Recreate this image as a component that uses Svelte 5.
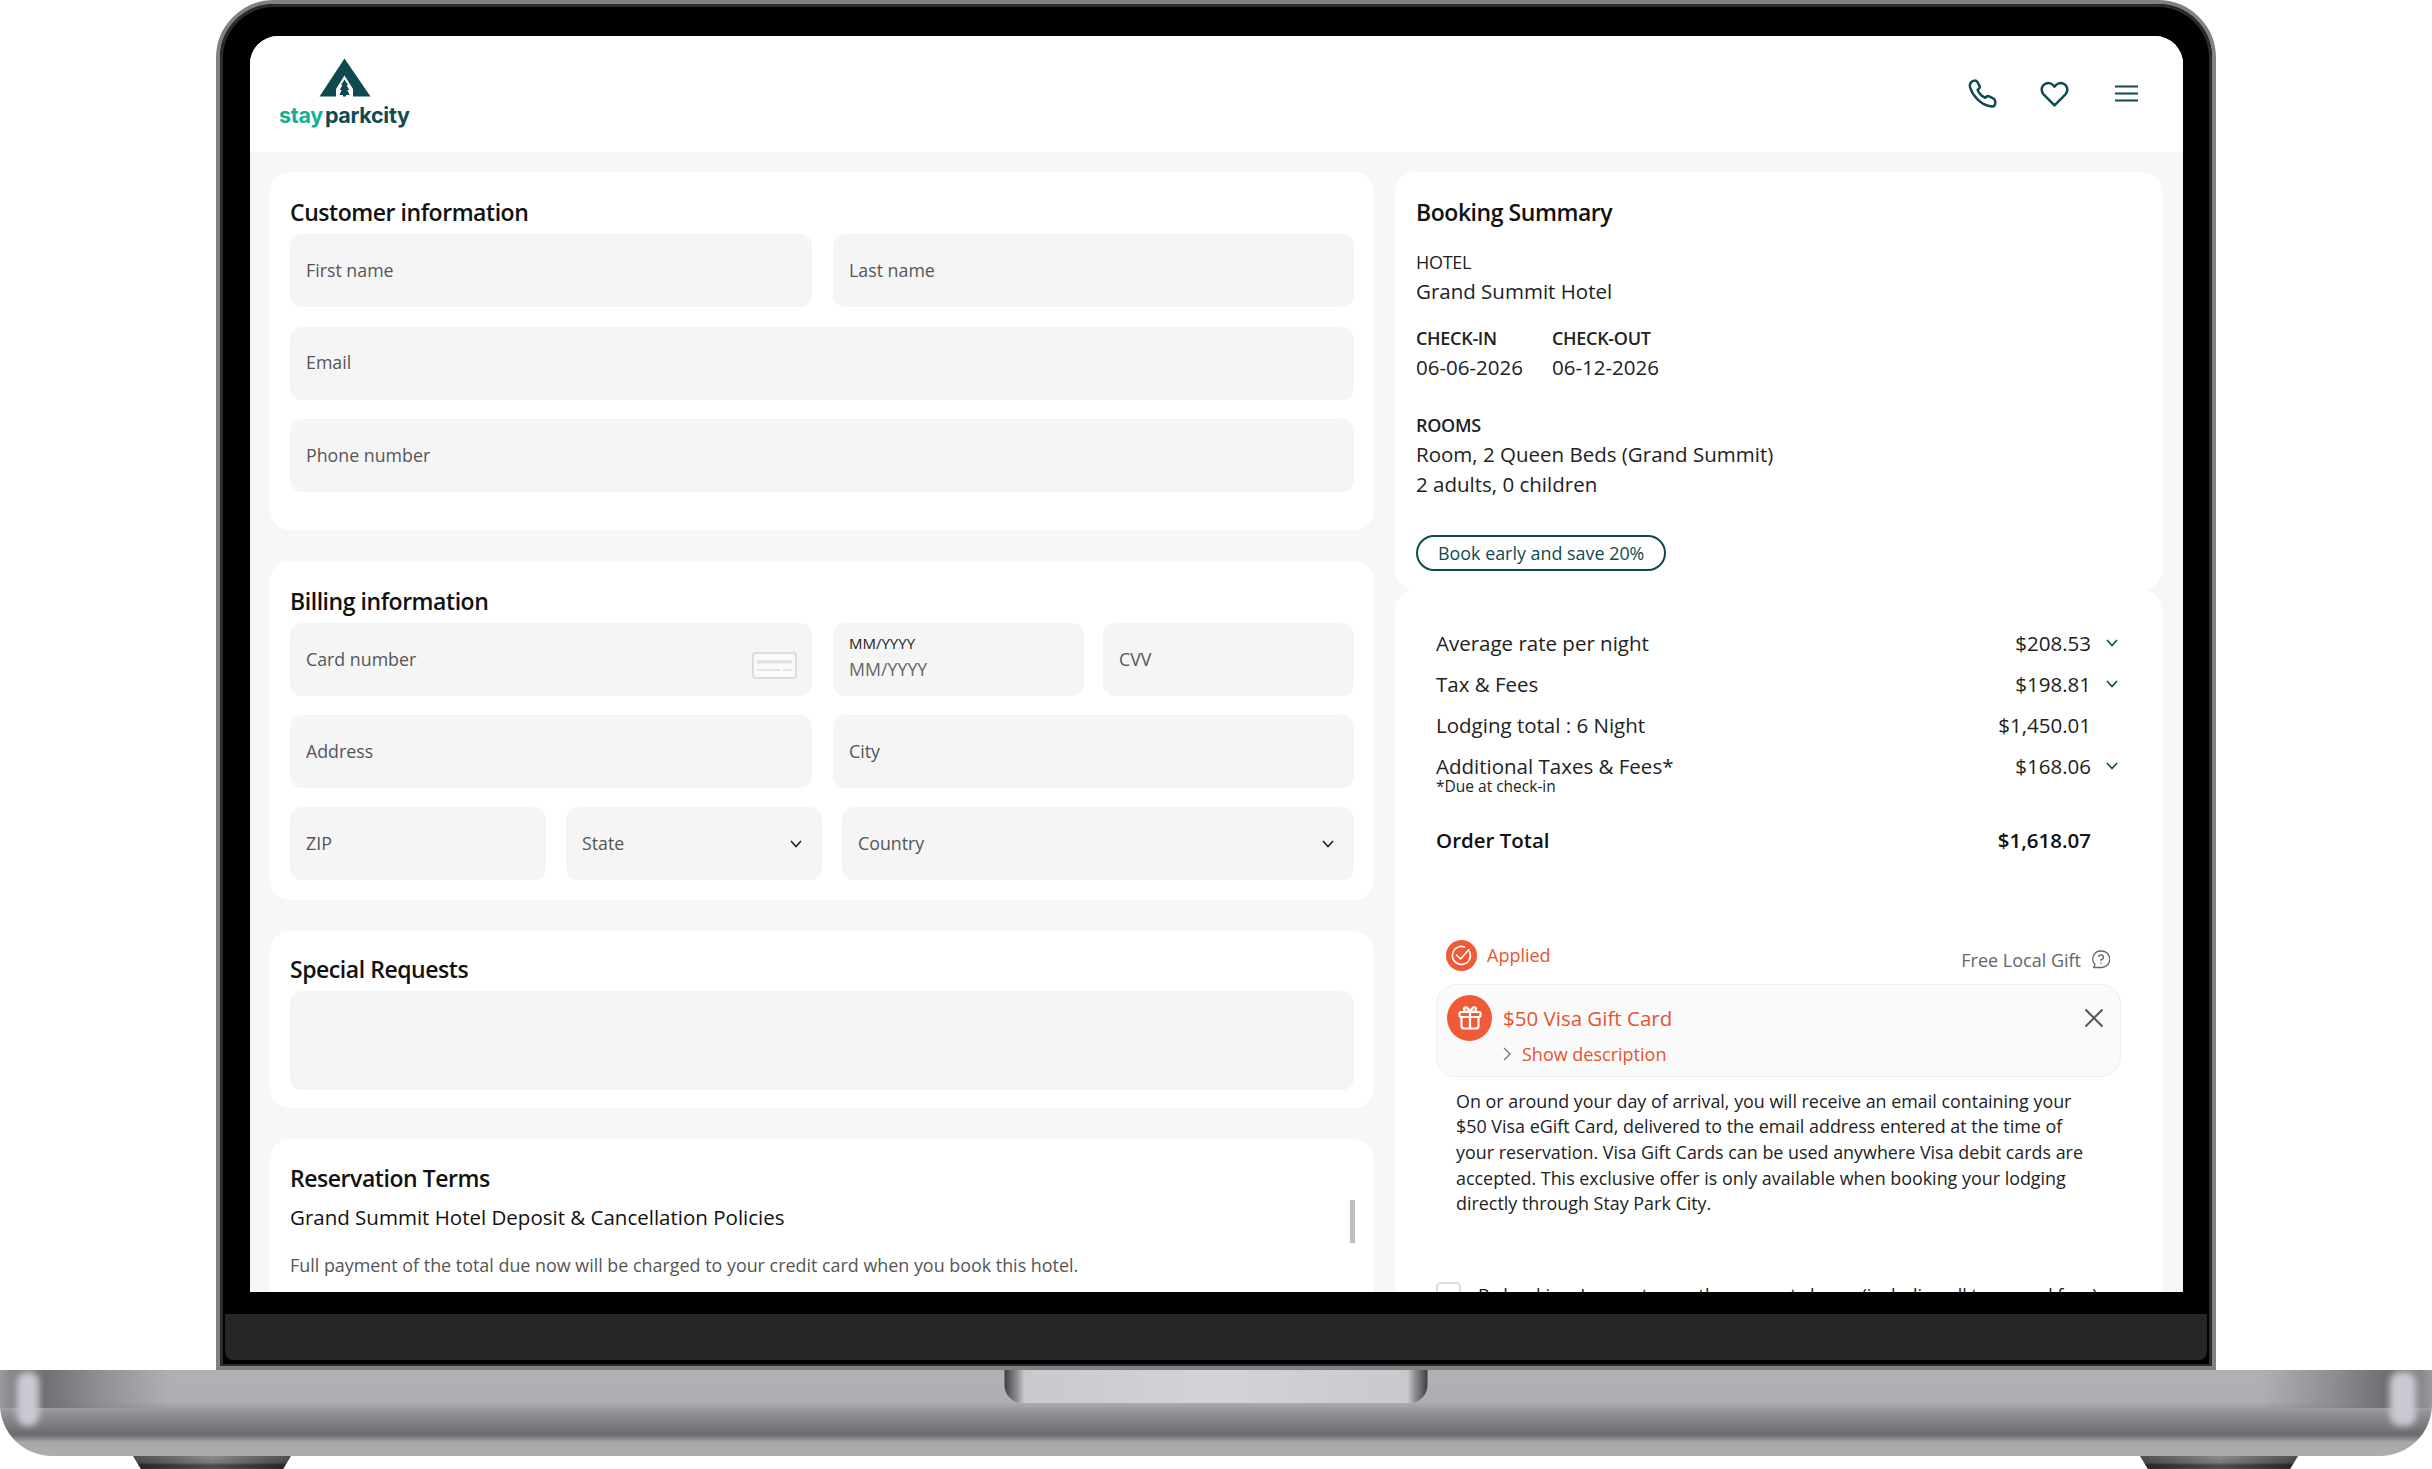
<script>
  const rates = [
    { label: 'Average rate per night', amount: '$208.53', more: true },
    { label: 'Tax & Fees', amount: '$198.81', more: true },
    { label: 'Lodging total : 6 Night', amount: '$1,450.01', more: false },
    { label: 'Additional Taxes & Fees*', note: '*Due at check-in', amount: '$168.06', more: true }
  ];
</script>

<div class="page">
  <div class="lid">
    <div class="bevel">
      <div class="screen">
        <header>
          <div class="logo">
            <svg width="52" height="39" viewBox="0 0 52 39">
              <path fill="#0e4a50" d="M25.5 0.5 L51.5 38.5 H34 V31 L25.5 17.5 L17 31 V38.5 H0.5 Z" />
              <path fill="#0e4a50" d="M25.5 21.5 L29 27 H27.6 L30.2 32 H28.4 L30.6 37 H27 V38.5 H24 V37 H20.4 L22.6 32 H20.8 L23.4 27 H22 Z" />
            </svg>
            <div class="wordmark"><span class="stay">stay</span>parkcity</div>
          </div>
          <div class="actions">
            <svg width="29" height="29" viewBox="0 0 29 29" fill="none" stroke="#0e4a50" stroke-width="2.5" stroke-linejoin="round">
              <path d="M3 3.4 C5 1.2 8 1 9.4 3 L11.6 7.2 C12.2 8.6 11.2 9.8 9.6 10.8 C10.8 14 14 17.4 17.4 18.8 C18.4 17.4 19.8 16.8 21.2 17.4 L25.6 19.6 C27.6 21 27.8 24.4 26.4 26.6 C25.4 27.8 23.6 27.6 21 27 C12 25 4.4 16.4 2 8 C1.6 6 2 4.6 3 3.4 Z" />
            </svg>
            <svg width="29" height="26" viewBox="0 0 29 26" fill="none" stroke="#0e4a50" stroke-width="2.5" stroke-linejoin="round">
              <path d="M14.5 24.4 L3.8 13.6 C0.4 10 1.4 5 5 3 C8.6 1 12.4 2.4 14.5 5.6 C16.6 2.4 20.4 1 24 3 C27.6 5 28.6 10 25.2 13.6 Z" />
            </svg>
            <svg class="menu" width="23" height="17" viewBox="0 0 23 17" stroke="#0e4a50" stroke-width="2">
              <path d="M0 1.5 H23 M0 8.5 H23 M0 15.5 H23" />
            </svg>
          </div>
        </header>

        <main>
          <div class="left">
            <section class="card customer">
              <h2>Customer information</h2>
              <div class="fields">
                <div class="row two">
                  <input placeholder="First name" />
                  <input placeholder="Last name" />
                </div>
                <input placeholder="Email" />
                <input placeholder="Phone number" />
              </div>
            </section>

            <section class="card billing">
              <h2>Billing information</h2>
              <div class="fields">
                <div class="row two">
                  <div class="field">
                    <span>Card number</span>
                    <svg class="card-icon" width="45" height="27" viewBox="0 0 45 27" fill="none">
                      <rect x="1" y="1" width="43" height="25" rx="3" fill="#fafafa" stroke="#d4d4d4" stroke-width="1.5" />
                      <rect x="5" y="8" width="35" height="3.5" fill="#e2e2e2" />
                      <rect x="5" y="17" width="23" height="2" fill="#e2e2e2" />
                      <rect x="31" y="17" width="9" height="2" fill="#e2e2e2" />
                    </svg>
                  </div>
                  <div class="row expiry">
                    <div class="field stacked">
                      <label for="expiry">MM/YYYY</label>
                      <span id="expiry">MM/YYYY</span>
                    </div>
                    <input placeholder="CVV" />
                  </div>
                </div>
                <div class="row two">
                  <input placeholder="Address" />
                  <input placeholder="City" />
                </div>
                <div class="row address">
                  <input placeholder="ZIP" />
                  <div class="field">
                    <span>State</span>
                    <svg class="chev" width="12" height="8" viewBox="0 0 12 8" fill="none" stroke="#222" stroke-width="1.6"><path d="M1 1 L6 6.5 L11 1" /></svg>
                  </div>
                  <div class="field">
                    <span>Country</span>
                    <svg class="chev" width="12" height="8" viewBox="0 0 12 8" fill="none" stroke="#222" stroke-width="1.6"><path d="M1 1 L6 6.5 L11 1" /></svg>
                  </div>
                </div>
              </div>
            </section>

            <section class="card requests">
              <h2>Special Requests</h2>
              <textarea></textarea>
            </section>

            <section class="card terms">
              <h2>Reservation Terms</h2>
              <h3>Grand Summit Hotel Deposit &amp; Cancellation Policies</h3>
              <p>Full payment of the total due now will be charged to your credit card when you book this hotel.</p>
              <div class="scrollbar"></div>
            </section>
          </div>

          <div class="right">
            <section class="summary">
              <h2>Booking Summary</h2>
              <div class="label plain">HOTEL</div>
              <div class="value">Grand Summit Hotel</div>
              <div class="dates">
                <div>
                  <div class="label">CHECK-IN</div>
                  <div class="value">06-06-2026</div>
                </div>
                <div>
                  <div class="label">CHECK-OUT</div>
                  <div class="value">06-12-2026</div>
                </div>
              </div>
              <div class="label rooms">ROOMS</div>
              <div class="value">Room, 2 Queen Beds (Grand Summit)</div>
              <div class="value">2 adults, 0 children</div>
              <div class="pill">Book early and save 20%</div>
            </section>

            <section class="totals">
              {#each rates as rate}
                <div class="rate">
                  <div>
                    {rate.label}
                    {#if rate.note}<div class="note">{rate.note}</div>{/if}
                  </div>
                  <div class="amount">{rate.amount}</div>
                  <div class="more">
                    {#if rate.more}
                      <svg width="12" height="8" viewBox="0 0 12 8" fill="none" stroke="#0e4a50" stroke-width="1.6"><path d="M1 1 L6 6.5 L11 1" /></svg>
                    {/if}
                  </div>
                </div>
              {/each}
              <div class="rate total">
                <div>Order Total</div>
                <div class="amount">$1,618.07</div>
                <div class="more"></div>
              </div>

              <div class="promo-head">
                <div class="applied">
                  <svg width="31" height="31" viewBox="0 0 31 31" fill="none">
                    <circle cx="15.5" cy="15.5" r="15.5" fill="#f15a36" />
                    <path d="M23.5 11.5 A9 9 0 1 1 18.5 7" stroke="#fff" stroke-width="1.6" stroke-linecap="round" />
                    <path d="M10.5 15 L14.5 19 L23 9.5" stroke="#fff" stroke-width="1.6" stroke-linecap="round" stroke-linejoin="round" />
                  </svg>
                  <span>Applied</span>
                </div>
                <div class="free">
                  <span>Free Local Gift</span>
                  <svg width="18" height="19" viewBox="0 0 18 19" fill="none" stroke="#666" stroke-width="1.3">
                    <path d="M9 1 A8 8 0 0 0 3 14.5 L1.5 17.5 H10 A8 8 0 0 0 9 1 Z" stroke-linejoin="round" />
                    <path d="M6.6 7 A2.4 2.4 0 1 1 9 9.6 V11" />
                    <path d="M9 12.6 V13.8" />
                  </svg>
                </div>
              </div>

              <div class="gift">
                <div class="gift-icon">
                  <svg width="24" height="25" viewBox="0 0 24 25" fill="none" stroke="#fff" stroke-width="2.2" stroke-linejoin="round">
                    <rect x="1.5" y="7" width="21" height="5" rx="1.5" />
                    <path d="M3.5 12 V21 Q3.5 23.5 6 23.5 H18 Q20.5 23.5 20.5 21 V12" />
                    <path d="M12 7 V23.5" />
                    <path d="M12 7 C9 7 6 6.5 6 4 C6 1.5 9.5 1 12 7 C14.5 1 18 1.5 18 4 C18 6.5 15 7 12 7 Z" />
                  </svg>
                </div>
                <div class="gift-text">
                  <div class="gift-title">$50 Visa Gift Card</div>
                  <div class="gift-link">
                    <svg width="8" height="14" viewBox="0 0 8 14" fill="none" stroke="#777" stroke-width="1.4"><path d="M1 1 L7 7 L1 13" /></svg>
                    <span>Show description</span>
                  </div>
                </div>
                <svg class="close" width="20" height="20" viewBox="0 0 20 20" stroke="#555" stroke-width="2"><path d="M1.5 1.5 L18.5 18.5 M18.5 1.5 L1.5 18.5" /></svg>
              </div>

              <p class="gift-copy">On or around your day of arrival, you will receive an email containing your $50 Visa eGift Card, delivered to the email address entered at the time of your reservation. Visa Gift Cards can be used anywhere Visa debit cards are accepted. This exclusive offer is only available when booking your lodging directly through Stay Park City.</p>

              <div class="agree">
                <div class="box"></div>
                <span>By booking, I agree to pay the amount shown (including all taxes and fees)</span>
              </div>
            </section>
          </div>
        </main>
      </div>
      <div class="strip"></div>
    </div>
  </div>

  <div class="base">
    <div class="notch"></div>
    <div class="shine left-shine"></div>
    <div class="shine right-shine"></div>
  </div>
  <div class="feet">
    <div class="foot"></div>
    <div class="foot"></div>
  </div>
</div>

<style>
  :global(body) {
    margin: 0;
    background: #fff;
  }

  * {
    box-sizing: border-box;
  }

  .page {
    width: 2432px;
    height: 1469px;
    overflow: hidden;
    background: #fff;
    font-family: "Open Sans", sans-serif;
    color: #222;
  }

  /* laptop frame */
  .lid {
    width: 2000px;
    height: 1370px;
    margin-left: 216px;
    border: 4px solid #808082;
    border-radius: 58px 58px 0 0;
    background: #000;
  }

  .bevel {
    height: 100%;
    border: 3px solid #2b2b2d;
    border-bottom-width: 2px;
    border-radius: 54px 54px 0 0;
    background: #000;
    padding: 29px 27px 0;
  }

  .screen {
    width: 1933px;
    height: 1256px;
    margin-right: -2px;
    border-radius: 28px 28px 0 0;
    overflow: hidden;
    background: #f7f7f7;
  }

  .strip {
    height: 46px;
    width: 1982px;
    margin: 22px 0 0 -25px;
    border-radius: 0 0 8px 8px;
    background: #262626;
  }

  .base {
    position: relative;
    height: 86px;
    border-radius: 0 0 52px 52px;
    overflow: hidden;
    background:
      linear-gradient(90deg, #9a9a9e 0, #8a8a8e 10px, #6f7074 45px, rgba(130, 130, 134, 0.7) 100px, rgba(176, 176, 181, 0) 170px, rgba(176, 176, 181, 0) 2260px, rgba(130, 130, 134, 0.7) 2330px, #6f7074 2385px, #8a8a8e 2422px, #9a9a9e 100%) 0 0 / 100% 38px no-repeat,
      linear-gradient(180deg, #b0b0b5 0, #afafb3 37%, #96969a 48%, #6e6f73 72%, #6d6e72 76%, #a8a8ab 84%, #adadb0 100%);
  }

  .notch {
    position: absolute;
    top: 0;
    left: 50%;
    transform: translateX(-50%);
    width: 423px;
    height: 33px;
    border-radius: 0 0 18px 18px;
    background: linear-gradient(90deg, #3f4044 0, #8c8c90 12px, #c8c8cd 20px, #d3d3da 50%, #c8c8cd calc(100% - 20px), #8c8c90 calc(100% - 12px), #3f4044 100%);
  }

  .shine {
    position: absolute;
    top: 2px;
    width: 22px;
    height: 54px;
    border-radius: 10px;
    background: #c9c9d2;
    filter: blur(3px);
  }

  .left-shine {
    left: 17px;
  }

  .right-shine {
    right: 16px;
    width: 26px;
  }

  .feet {
    display: flex;
    justify-content: space-between;
    padding: 0 134px 0 133px;
  }

  .foot {
    width: 158px;
    height: 13px;
    clip-path: polygon(0 0, 100% 0, 95% 100%, 5% 100%);
    background:
      linear-gradient(90deg, rgba(0, 0, 0, 0.35), rgba(255, 255, 255, 0.12) 50%, rgba(0, 0, 0, 0.35)),
      linear-gradient(180deg, #7c7c7c 0, #6a6a6a 50%, #333 70%, #3a3a3a 100%);
  }

  /* page header */
  header {
    height: 116px;
    background: #fff;
    display: flex;
    align-items: flex-start;
    justify-content: space-between;
    padding: 22px 45px 0 29px;
  }

  .logo {
    display: flex;
    flex-direction: column;
    align-items: center;
  }

  .logo svg {
    display: block;
    margin-left: 1px;
  }

  .wordmark {
    margin-top: 4px;
    font-family: Inter, sans-serif;
    font-weight: 700;
    font-size: 21.5px;
    line-height: 28px;
    letter-spacing: -0.3px;
    color: #0e4a50;
  }

  .stay {
    color: #14b096;
    margin-right: 2px;
  }

  .actions {
    display: flex;
    align-items: center;
    gap: 43px;
    padding-top: 21px;
  }

  .menu {
    margin-left: 3px;
  }

  /* main columns */
  main {
    display: grid;
    grid-template-columns: 1104px 767px;
    gap: 21px;
    padding: 20px 0 0 20px;
  }

  .left {
    display: flex;
    flex-direction: column;
    gap: 31px;
  }

  .card {
    position: relative;
    background: #fff;
    border-radius: 20px;
    padding: 24px 20px 0;
  }

  .customer {
    padding-bottom: 38px;
  }

  .billing {
    padding-bottom: 20px;
  }

  .requests {
    padding-top: 22px;
    padding-bottom: 18px;
  }

  .terms {
    padding-top: 23px;
    height: 200px;
  }

  h2 {
    margin: 0 0 6px;
    font-size: 23px;
    line-height: 32px;
    font-weight: 600;
    color: #111;
    letter-spacing: -0.45px;
  }

  h3 {
    margin: 9px 0 0;
    font-size: 20.5px;
    line-height: 28px;
    font-weight: 400;
    color: #111;
  }

  .terms p {
    margin: 22px 0 0;
    font-size: 17.9px;
    line-height: 24px;
    color: #555;
  }

  .scrollbar {
    position: absolute;
    top: 61px;
    right: 19px;
    width: 5px;
    height: 43px;
    background: #bdbdbd;
  }

  .fields {
    display: flex;
    flex-direction: column;
    gap: 19.5px;
  }

  .billing .fields {
    gap: 19px;
  }

  .row {
    display: grid;
    gap: 21px;
  }

  .two {
    grid-template-columns: 522px 521px;
  }

  .expiry {
    grid-template-columns: 251px 251px;
    gap: 19px;
  }

  .address {
    grid-template-columns: 256px 256px 512px;
    gap: 20px;
  }

  input,
  .field,
  textarea {
    width: 100%;
    height: 73px;
    min-width: 0;
    border: 0;
    outline: 0;
    border-radius: 12px;
    background: #f5f5f5;
    padding: 0 16px 2px;
    font: 400 17.8px "Open Sans", sans-serif;
    color: #555;
  }

  input::placeholder {
    color: #555;
    opacity: 1;
  }

  textarea {
    display: block;
    height: 99px;
    resize: none;
  }

  .field {
    display: flex;
    align-items: center;
    justify-content: space-between;
  }

  .card-icon {
    margin: 14px -1px 0 0;
  }

  .chev {
    margin: 2px 4px 0 0;
  }

  .stacked {
    flex-direction: column;
    align-items: flex-start;
    justify-content: flex-start;
    padding-top: 9px;
  }

  .stacked label {
    font-size: 15px;
    line-height: 22px;
    color: #222;
  }

  .stacked span {
    font-size: 17.8px;
    line-height: 26px;
    margin-top: 2px;
    color: #666;
  }

  /* booking summary */
  .summary {
    background: #fff;
    border-radius: 20px;
    height: 418px;
    padding: 24px 21px 0;
  }

  .summary h2 {
    margin-bottom: 21px;
  }

  .label {
    margin-bottom: 1px;
    font-size: 18px;
    line-height: 26px;
    font-weight: 600;
    color: #222;
    letter-spacing: -0.3px;
  }

  .plain {
    font-weight: 500;
  }

  .value {
    font-size: 20.5px;
    line-height: 30px;
    color: #222;
  }

  .dates {
    display: flex;
    gap: 29px;
    margin-top: 19px;
  }

  .rooms {
    margin-top: 30px;
  }

  .pill {
    display: inline-flex;
    align-items: center;
    height: 36px;
    margin-top: 36px;
    padding: 0 20px;
    border: 2px solid #0e4a50;
    border-radius: 18px;
    font-size: 17.9px;
    color: #0e4a50;
  }

  .totals {
    background: #fff;
    border-radius: 20px 20px 0 0;
    padding: 33px 41px 40px;
  }

  .rate {
    display: grid;
    grid-template-columns: 1fr auto 27px;
    padding-right: 3px;
    font-size: 20.5px;
    line-height: 41px;
    color: #222;
  }

  .note {
    font-size: 15.5px;
    line-height: 14px;
    margin-top: -8px;
  }

  .more {
    display: flex;
    justify-content: flex-end;
    padding-top: 16px;
  }

  .total {
    margin-top: 27px;
    font-weight: 600;
    color: #111;
  }

  .promo-head {
    display: flex;
    justify-content: space-between;
    align-items: flex-start;
    height: 44px;
    margin-top: 78.5px;
    padding: 0 11px 0 10px;
  }

  .applied {
    display: flex;
    align-items: center;
    gap: 10px;
    font-size: 18px;
    color: #e8532f;
  }

  .free {
    display: flex;
    align-items: center;
    gap: 11px;
    margin-top: 8px;
    font-size: 18px;
    color: #666;
  }

  .gift {
    display: flex;
    align-items: flex-start;
    gap: 11px;
    height: 93px;
    padding: 10px 16px 11px 10px;
    border: 1px solid #eee;
    border-radius: 20px;
    background: #fafafa;
  }

  .gift-icon {
    display: flex;
    align-items: center;
    justify-content: center;
    flex: none;
    width: 45px;
    height: 46px;
    border-radius: 50%;
    background: #f15a36;
  }

  .gift-text {
    flex: 1;
  }

  .gift-title {
    font-size: 20.5px;
    line-height: 46px;
    color: #e8532f;
  }

  .gift-link {
    display: flex;
    align-items: center;
    gap: 11px;
    margin-top: 2px;
    font-size: 18px;
    line-height: 22px;
    color: #e8532f;
  }

  .close {
    margin-top: 13px;
  }

  .gift-copy {
    margin: 12px 20px 0;
    font-size: 17.9px;
    line-height: 25.7px;
    color: #222;
  }

  .agree {
    display: flex;
    gap: 17px;
    margin-top: 65px;
    font-size: 18px;
    line-height: 26px;
    white-space: nowrap;
  }

  .box {
    flex: none;
    width: 25px;
    height: 25px;
    border: 2px solid #ddd;
    border-radius: 5px;
  }
</style>
